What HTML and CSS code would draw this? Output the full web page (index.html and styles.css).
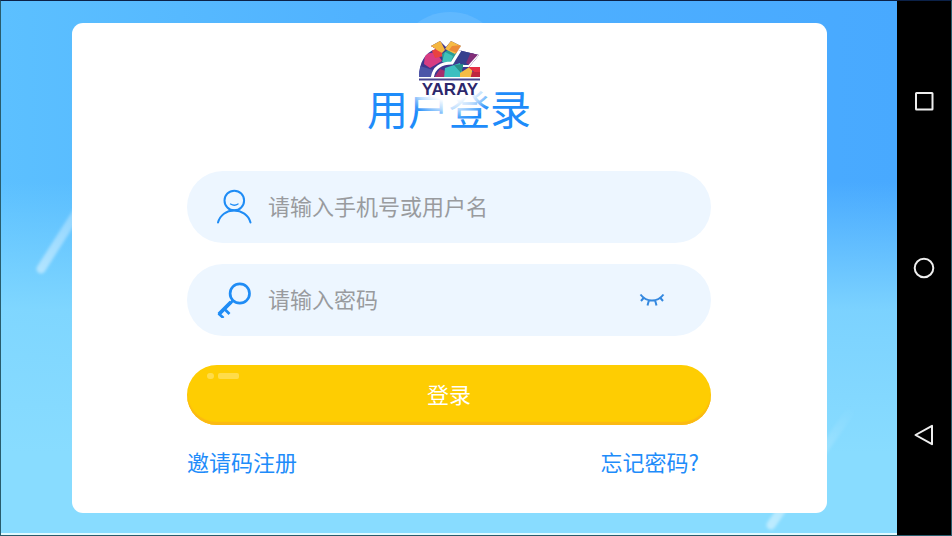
FILE: index.html
```html
<!DOCTYPE html>
<html lang="zh-CN">
<head>
<meta charset="utf-8">
<meta name="viewport" content="width=device-width, initial-scale=1">
<title>用户登录</title>
<link rel="stylesheet" href="styles.css">
</head>
<body>
<main class="stage">
  <svg class="streaks" viewBox="0 0 896 532" preserveAspectRatio="none" aria-hidden="true">
    <defs>
      <linearGradient id="s1" gradientUnits="userSpaceOnUse" x1="38" y1="271" x2="125" y2="135">
        <stop offset="0" stop-color="#fff" stop-opacity=".45"/><stop offset="1" stop-color="#fff" stop-opacity=".1"/>
      </linearGradient>
      <linearGradient id="s2" gradientUnits="userSpaceOnUse" x1="768" y1="526" x2="850" y2="405">
        <stop offset="0" stop-color="#fff" stop-opacity=".45"/><stop offset="1" stop-color="#fff" stop-opacity="0"/>
      </linearGradient>
      <filter id="soft"><feGaussianBlur stdDeviation="1.500"/></filter>
    </defs>
    <g fill="none" stroke-width="9" stroke-linecap="round" filter="url(#soft)">
      <path d="M40 268L125 134" stroke="url(#s1)"/>
      <path d="M770 524L858 398" stroke="url(#s2)"/>
    </g>
  </svg>
  <section class="card">
    <header class="head">
      <h1 class="title">用户登录</h1>
      <svg class="logo" viewBox="0 0 110 110" role="img" aria-label="YARAY">
        <defs>
          <radialGradient id="veil" gradientUnits="userSpaceOnUse" cx="55" cy="55" r="55">
            <stop offset="0" stop-color="#fff"/><stop offset=".6" stop-color="#fff"/><stop offset=".78" stop-color="#fff" stop-opacity=".65"/><stop offset=".96" stop-color="#fff" stop-opacity="0"/>
          </radialGradient>
          <clipPath id="dome"><path d="M24 65C24 51 30 40 41 37L36 34L45 29L51 35L56 29L66 34L63 38L84 43L74 55H85V65Z"/></clipPath>
        </defs>
        <circle cx="55" cy="55" r="55" fill="#fff" fill-opacity=".1"/>
        <path d="M0 11H110V110H0Z" fill="url(#veil)"/>
        <g clip-path="url(#dome)">
          <path fill="#3f368f" d="M20 25H90V68H20Z"/>
          <path fill="#4c55a8" d="M23 66L25 54L38 58L36 68Z"/>
          <path fill="#d83c82" d="M30 42L41 40L47 49L35 56L29 52Z"/>
          <path fill="#e8433f" d="M34 32L44 37L49 44L40 46Z"/>
          <path fill="#f4b640" d="M35 34L45 28L50 38L47 41Z"/>
          <path fill="#2a9b96" d="M47 42L54 37L62 41L59 52L48 50Z"/>
          <path fill="#41c1bb" d="M50 40L58 44L55 52L47 50Z"/>
          <path fill="#f6bb45" d="M50 37L56 28L67 34L60 42Z"/>
          <path fill="#ec8b38" d="M57 34L67 33L62 41L54 38Z"/>
          <path fill="#35408e" d="M67 36L79 41L72 54L61 50Z"/>
          <path fill="#822e78" d="M76 40L85 43L76 54L71 51Z"/>
          <path fill="#a72e6d" d="M39 66L45 57L53 60L50 68Z"/>
          <path fill="#3dbfc0" d="M50 56L65 51L69 66H49Z"/>
          <path fill="#288f87" d="M59 53L69 52L66 61Z"/>
          <path fill="#f5bc46" d="M65 61L76 54L79 67H65Z"/>
          <path fill="#e42f44" d="M72 54H87V65L79 60Z"/>
          <path fill="#be2640" d="M77 60H87V68H75Z"/>
          <path d="M37 68C38 54 48 51 57 51L67 35" fill="none" stroke="#fff" stroke-width="3"/>
          <path d="M68 54H74L84 43" fill="none" stroke="#fff" stroke-width="2"/>
        </g>
        <path d="M24 67.500H85" stroke="#49468f" stroke-width="2"/>
        <text class="logo-text" x="55" y="83" text-anchor="middle">YARAY</text>
      </svg>
    </header>
    <form class="form">
      <div class="field">
        <label for="user" class="icon" aria-label="用户名">
          <svg viewBox="0 0 36 36" width="36" height="36" fill="none" stroke="#1f8cf5" stroke-width="2" stroke-linecap="round">
            <circle cx="18.300" cy="11.500" r="9.800"/><path d="M2 33.500C4 26 10.500 21.500 18 21.500S32.500 26 34.500 33.500"/><path d="M14.500 15Q18.500 17.500 22 15" stroke-width="1.300"/>
          </svg>
        </label>
        <input id="user" class="input" type="text" placeholder="请输入手机号或用户名">
      </div>
      <div class="field">
        <label for="pass" class="icon" aria-label="密码">
          <svg viewBox="0 0 36 36" width="36" height="36" fill="none" stroke="#1f8cf5" stroke-width="2.700">
            <circle cx="23.800" cy="11.500" r="9.700"/><path d="M17 18.500L2.500 33M2.500 31.500L7.500 36M8.500 27L13.500 32"/><path d="M3 32L15 20" stroke-width="3.700"/>
          </svg>
        </label>
        <input id="pass" class="input" type="password" placeholder="请输入密码">
        <button class="eye" type="button" aria-label="显示密码">
          <svg viewBox="0 0 26 14" width="26" height="14" fill="none" stroke="#3488df" stroke-width="2">
            <path d="M1.500 1.500C7.500 9.500 18.500 9.500 24.500 1.500M5 4.500L2 8M10 7L8.500 12.500M16 7L17.500 12.500M21 4.500L24 8"/>
          </svg>
        </button>
      </div>
      <button class="submit" type="submit">登录</button>
      <nav class="links">
        <a class="link" href="#register">邀请码注册</a>
        <a class="link" href="#forgot">忘记密码?</a>
      </nav>
    </form>
  </section>
</main>
<aside class="system">
  <button class="key" type="button" aria-label="最近任务"><svg viewBox="0 0 22 22" width="22" height="22"><rect x="3" y="3" width="16.500" height="16.500" rx=".5"/></svg></button>
  <button class="key" type="button" aria-label="主屏幕"><svg viewBox="0 0 22 22" width="22" height="22"><circle cx="11" cy="11" r="9.300"/></svg></button>
  <button class="key" type="button" aria-label="返回"><svg viewBox="0 0 22 22" width="22" height="22"><path d="M19 1.800V20.200L2.500 11Z"/></svg></button>
</aside>
</body>
</html>
```
FILE: styles.css
```css
* {
  box-sizing: border-box;
}

body {
  margin: 0;
  min-height: 100vh;
  display: grid;
  grid-template-columns: 1fr 54px;
  border: 1px solid #285c6c;
  border-top-color: #0b2148;
  font-family: "Noto Sans CJK SC", sans-serif;
  font-size: 22px;
  line-height: 32px;
}

button,
input {
  font: inherit;
  border: 0;
  padding: 0;
  background: none;
}

.stage {
  position: relative;
  display: flex;
  padding: 22px 70px 20px 71px;
  border-bottom: 2px solid #e2faff;
  background:
    linear-gradient(to bottom, rgba(136, 220, 255, 0) 34%, rgba(136, 220, 255, 0.8) 58%, #88dcff 85%),
    linear-gradient(to right, #5cc0ff, #50b2ff 40%, #48a9ff);
}

.streaks {
  position: absolute;
  inset: 0;
  width: 100%;
  height: 100%;
}

.card {
  position: relative;
  flex: 1;
  padding: 56px 116px 32px 115px;
  border-radius: 11px;
  background: #fff;
}

.head {
  display: flex;
  justify-content: center;
  margin-bottom: 36px;
}

.title {
  margin: 0;
  font-size: 41px;
  font-weight: 400;
  line-height: 56px;
  color: #1e8cfa;
}

.logo {
  position: absolute;
  top: -11px;
  left: 50%;
  width: 110px;
  height: 110px;
  margin-left: -55px;
}

.logo-text {
  font: bold 17px "Liberation Sans", sans-serif;
  fill: #2d286c;
}

.form {
  display: flex;
  flex-direction: column;
}

.field {
  display: flex;
  align-items: center;
  height: 72px;
  margin-bottom: 21px;
  padding: 0 46px 0 29px;
  border-radius: 36px;
  background: #edf6ff;
}

.icon {
  display: flex;
  margin-right: 16px;
}

.input {
  flex: 1;
  min-width: 0;
  height: 40px;
  padding-bottom: 4px;
  color: #333;
  outline: none;
}

.input::placeholder {
  color: #999b9e;
  opacity: 1;
}

.eye {
  display: flex;
}

.submit {
  position: relative;
  height: 60px;
  margin-top: 8px;
  padding-bottom: 4px;
  border-radius: 30px;
  background: #fecd02;
  box-shadow: inset 0 -3px 1px #fbb913;
  color: #fff;
}

.submit::before,
.submit::after {
  content: "";
  position: absolute;
  top: 8px;
  left: 20px;
  width: 7px;
  height: 6px;
  border-radius: 3px;
  background: #ffdc4a;
}

.submit::after {
  left: 31px;
  width: 21px;
  border-radius: 2px;
}

.links {
  display: flex;
  justify-content: space-between;
  margin-top: 20px;
  padding-right: 12px;
}

.link {
  color: #1e8cfa;
  text-decoration: none;
}

.system {
  display: flex;
  flex-direction: column;
  justify-content: space-between;
  align-items: center;
  padding: 89px 0;
  background: #000;
}

.key {
  display: flex;
}

.key svg {
  fill: none;
  stroke: #eee;
  stroke-width: 2;
  stroke-linejoin: round;
}
```
